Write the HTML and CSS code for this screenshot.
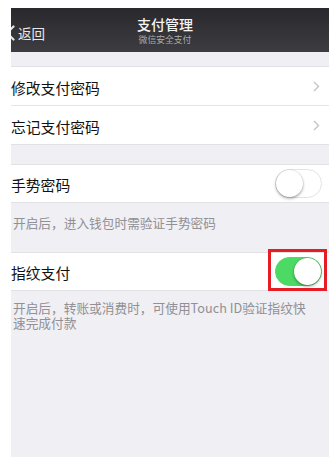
FILE: index.html
```html
<!DOCTYPE html>
<html lang="zh-CN">
<head>
<meta charset="utf-8">
<title>支付管理</title>
<link rel="stylesheet" href="styles.css">
</head>
<body>
<div class="screen">
  <header class="nav">
    <div class="back">
      <svg class="back-chev" width="10" height="16" viewBox="0 0 10 16"><path d="M8.5 1.5 L2 8 L8.5 14.5" fill="none" stroke="#e6e6e6" stroke-width="2.2" stroke-linecap="round" stroke-linejoin="round"/></svg>
      <span class="back-text">返回</span>
    </div>
    <div class="title">
      <div class="title-main">支付管理</div>
      <div class="title-sub">微信安全支付</div>
    </div>
    <div></div>
  </header>

  <section class="group group-first">
    <div class="row">
      <span class="label">修改支付密码</span>
      <svg class="chev" width="7" height="11" viewBox="0 0 7 11"><path d="M1 1 L5.5 5.5 L1 10" fill="none" stroke="#c4c4c9" stroke-width="1.4"/></svg>
    </div>
    <div class="row row-sep">
      <span class="label">忘记支付密码</span>
      <svg class="chev" width="7" height="11" viewBox="0 0 7 11"><path d="M1 1 L5.5 5.5 L1 10" fill="none" stroke="#c4c4c9" stroke-width="1.4"/></svg>
    </div>
  </section>

  <section class="group group-second">
    <div class="row row-toggle">
      <span class="label">手势密码</span>
      <span class="switch"><span class="knob"></span></span>
    </div>
  </section>
  <p class="footnote fn-first">开启后，进入钱包时需验证手势密码</p>

  <section class="group">
    <div class="row row-toggle row-marked">
      <span class="label">指纹支付</span>
      <span class="switch on"><span class="knob"></span></span>
      <span class="mark"></span>
    </div>
  </section>
  <p class="footnote fn-second">开启后，转账或消费时，可使用Touch ID验证指纹快速完成付款</p>
</div>
</body>
</html>
```

FILE: styles.css
```css
html, body {
  margin: 0;
  padding: 0;
  background: #ffffff;
}

body {
  font-family: "Noto Sans CJK SC", "Noto Sans", "Liberation Sans", sans-serif;
}

.screen {
  margin: 8px 0 0 11px;
  width: 318px;
  height: 449px;
  background: #efeff4;
  overflow: hidden;
}

.nav {
  height: 44px;
  background: linear-gradient(#29292d, #3d3d41);
  display: grid;
  grid-template-columns: 1fr auto 1fr;
  align-items: center;
  padding-right: 10px;
  color: #fff;
}

.back {
  display: flex;
  align-items: center;
  margin-left: -6px;
  margin-top: 5px;
}

.back-chev {
  display: block;
}

.back-text {
  margin-left: 3px;
  font-size: 13.5px;
  line-height: 16px;
  color: #e8e8e8;
}

.title {
  text-align: center;
  margin-top: 2px;
}

.title-main {
  font-size: 14px;
  line-height: 17px;
  font-weight: 500;
  color: #f4f4f4;
}

.title-sub {
  font-size: 8.8px;
  line-height: 12px;
  color: #a9a9ad;
  margin-top: 1px;
}

.group {
  background: #fff;
  border-top: 1px solid #e2e2e6;
  border-bottom: 1px solid #e2e2e6;
}

.group-first {
  margin-top: 14px;
}

.group-second {
  margin-top: 19px;
}

.row {
  height: 38px;
  display: flex;
  align-items: center;
  justify-content: space-between;
  padding: 0 7px 0 0;
  position: relative;
}

.row-sep {
  border-top: 1px solid #e4e4e8;
}

.label {
  font-size: 14.8px;
  color: #111;
  padding-top: 2px;
}

.chev {
  margin-right: 2px;
  margin-top: 1px;
}

.row-toggle {
  height: 37px;
}

.switch {
  width: 47px;
  height: 29px;
  border-radius: 15px;
  box-sizing: border-box;
  border: 1.5px solid #e3e3e6;
  background: #fff;
  display: flex;
  align-items: center;
  padding: 0;
}

.switch .knob {
  width: 27px;
  height: 27px;
  border-radius: 50%;
  background: #fff;
  box-shadow: 0 1.5px 3px rgba(0, 0, 0, 0.35), 0 0 0 0.5px rgba(0, 0, 0, 0.08);
}

.switch.on {
  background: #4cd964;
  border-color: #4cd964;
  justify-content: flex-end;
}

.mark {
  position: absolute;
  right: 2px;
  top: -4px;
  width: 53px;
  height: 36px;
  border: 3px solid #e51d24;
}

.footnote {
  margin: 0;
  font-size: 12.7px;
  line-height: 15px;
  color: #909095;
  padding: 0 12px 0 2px;
}

.fn-first {
  padding-top: 12px;
  height: 37px;
  box-sizing: border-box;
  margin-bottom: 12px;
}

.fn-second {
  padding-top: 9px;
}
```
